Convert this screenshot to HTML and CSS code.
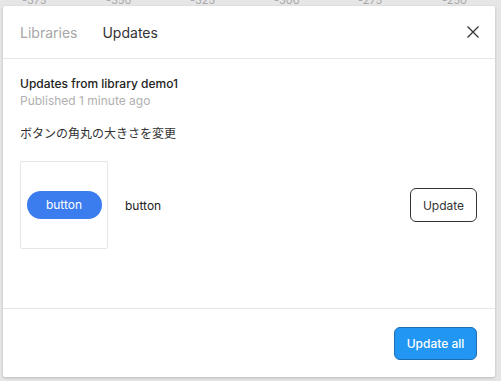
FILE: index.html
```html
<!DOCTYPE html>
<html>
<head>
	<meta charset="UTF-8">
	<title>Updates</title>
	<link rel="stylesheet" href="styles.css">
</head>
<body>
	<div class="ruler">
		<span>-375</span>
		<span>-350</span>
		<span>-325</span>
		<span>-300</span>
		<span>-275</span>
		<span>-250</span>
	</div>

	<div class="dialog">
		<div class="dialog-header">
			<div class="tabs">
				<span class="tab">Libraries</span>
				<span class="tab active">Updates</span>
			</div>
			<div class="close">
				<svg width="14" height="14" viewBox="0 0 14 14">
					<path d="M1.5 1.5L12.5 12.5M12.5 1.5L1.5 12.5" stroke="#333" stroke-width="1.3" fill="none" />
				</svg>
			</div>
		</div>

		<div class="dialog-body">
			<div class="lib-title">Updates from library demo1</div>
			<div class="lib-meta">Published 1 minute ago</div>
			<div class="lib-desc">ボタンの角丸の大きさを変更</div>

			<div class="component-row">
				<div class="preview">
					<span class="pill">button</span>
				</div>
				<div class="component-name">button</div>
				<button class="btn-outline">Update</button>
			</div>
		</div>

		<div class="dialog-footer">
			<button class="btn-primary">Update all</button>
		</div>
	</div>
</body>
</html>
```

FILE: styles.css
```css
* {
	padding: 0;
	margin: 0;
	box-sizing: border-box;
}

body {
	width: 501px;
	height: 381px;
	overflow: hidden;
	background-color: #e6e6e6;
	font-family: Inter, "Noto Sans CJK JP", sans-serif;
	color: #333;
}

/* canvas ruler, only its lower edge shows above the dialog */
.ruler {
	display: flex;
	height: 6px;
	overflow: hidden;
	padding-left: 22px;
	gap: 59px;
}

.ruler span {
	display: block;
	width: 25px;
	font-size: 11px;
	line-height: 11px;
	margin-top: -5px;
	color: #a8a8a8;
}

.dialog {
	display: flex;
	flex-direction: column;
	width: 492px;
	height: 371px;
	margin-left: 3px;
	background-color: #fff;
	border-radius: 2px;
	box-shadow: 0 1px 3px rgba(0, 0, 0, 0.2);
}

.dialog-header {
	display: flex;
	align-items: center;
	justify-content: space-between;
	height: 53px;
	padding: 0 14px 0 17px;
	border-bottom: 1px solid #e6e6e6;
}

.tabs {
	display: flex;
	gap: 25px;
}

.tab {
	font-size: 14px;
	color: #a6a6a6;
}

.tab.active {
	color: #333;
}

.close {
	display: flex;
	width: 16px;
	height: 16px;
	align-items: center;
	justify-content: center;
}

.dialog-body {
	flex: 1;
	padding: 17px 18px 0 17px;
}

.lib-title {
	font-size: 12px;
	line-height: 16px;
	font-weight: 500;
	color: #222;
}

.lib-meta {
	font-size: 12px;
	line-height: 16px;
	margin-top: 1px;
	color: #b0b0b0;
}

.lib-desc {
	font-size: 12px;
	line-height: 16px;
	margin-top: 17px;
	color: #333;
}

.component-row {
	display: flex;
	align-items: center;
	margin-top: 19px;
}

.preview {
	display: flex;
	align-items: center;
	justify-content: center;
	width: 88px;
	height: 88px;
	border: 1px solid #e6e6e6;
	border-radius: 2px;
}

.pill {
	display: block;
	width: 75px;
	height: 28px;
	line-height: 28px;
	text-align: center;
	border-radius: 14px;
	background-color: #3b7cef;
	color: #fff;
	font-size: 12px;
}

.component-name {
	flex: 1;
	margin-left: 17px;
	font-size: 12px;
	color: #222;
}

.btn-outline {
	width: 67px;
	height: 34px;
	border: 1px solid #333;
	border-radius: 6px;
	background: #fff;
	font-family: Inter, sans-serif;
	font-size: 12px;
	color: #333;
}

.dialog-footer {
	display: flex;
	align-items: center;
	justify-content: flex-end;
	height: 69px;
	padding-right: 18px;
	border-top: 1px solid #e6e6e6;
}

.btn-primary {
	width: 83px;
	height: 33px;
	border: 1px solid #1e6db3;
	border-radius: 6px;
	background-color: #2196f2;
	font-family: Inter, sans-serif;
	font-size: 12px;
	font-weight: 500;
	color: #fff;
}
```
